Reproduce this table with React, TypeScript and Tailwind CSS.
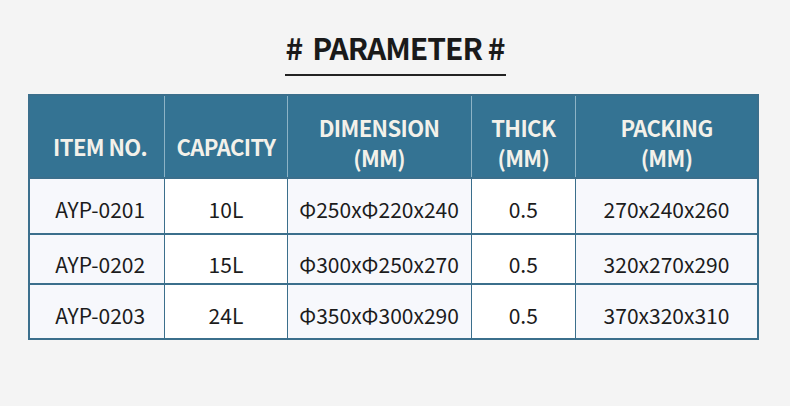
import React from "react";

const font = { fontFamily: '"Noto Sans CJK SC", "Noto Sans", sans-serif' };

const rows = [
  ["AYP-0201", "10L", "Φ250xΦ220x240", "0.5", "270x240x260"],
  ["AYP-0202", "15L", "Φ300xΦ250x270", "0.5", "320x270x290"],
  ["AYP-0203", "24L", "Φ350xΦ300x290", "0.5", "370x320x310"],
];

const widths = ["w-[135px]", "w-[123px]", "w-[185px]", "w-[105px]", "w-[183px]"];
const bgs = ["bg-[#f7f8fc]", "bg-white", "bg-[#f7f8fc]", "bg-white", "bg-[#f7f8fc]"];
const heights = ["h-[56px]", "h-[50px]", "h-[55px]"];
const pads = ["pt-[8px]", "pt-[11px]", "pt-[8px]"];

export default function App() {
  return (
    <div className="w-[790px] h-[406px] bg-[#f4f4f4] flex flex-col" style={font}>
      <div className="mt-[27px] flex flex-col items-center">
        <div className="text-[30px] font-bold text-[#1a1a1a] leading-[40px] tracking-[-1px] flex items-center">
          <span>#</span>
          <span className="ml-[10px]">PARAMETER</span>
          <span className="ml-[6px]">#</span>
        </div>
        <div className="w-[221px] h-[2px] bg-[#222] mt-[7px]" />
      </div>
      <div className="mt-[18px] ml-[28px] w-[731px] border-2 border-[#3b6f8c]">
        <div className="flex bg-[#347393] h-[81px] text-[#f3f1ea] text-[22px] font-bold leading-[30px] tracking-[-0.6px]">
          {[
            ["ITEM NO."],
            ["CAPACITY"],
            ["DIMENSION", "(MM)"],
            ["THICK", "(MM)"],
            ["PACKING", "(MM)"],
          ].map((lines, i) => (
            <div
              key={i}
              className={`${widths[i]} ${i > 0 ? "border-l border-[#8db3c6]" : ""} flex flex-col items-center justify-center ${lines.length === 1 ? "pt-[18px]" : "pt-[10px]"} ${i === 0 ? "pl-[6px]" : ""}`}
            >
              {lines.map((l, j) => (
                <span key={j}>{l}</span>
              ))}
            </div>
          ))}
        </div>
        {rows.map((r, ri) => (
          <div key={ri} className={`flex ${heights[ri]} border-t-2 border-[#3b6f8c] text-[21px] text-[#1c1c1c]`}>
            {r.map((c, ci) => (
              <div
                key={ci}
                className={`${widths[ci]} ${bgs[ci]} ${ci > 0 ? "border-l border-[#3b6f8c]" : "pl-[6px]"} flex items-center justify-center ${pads[ri]}`}
              >
                {c}
              </div>
            ))}
          </div>
        ))}
      </div>
    </div>
  );
}
